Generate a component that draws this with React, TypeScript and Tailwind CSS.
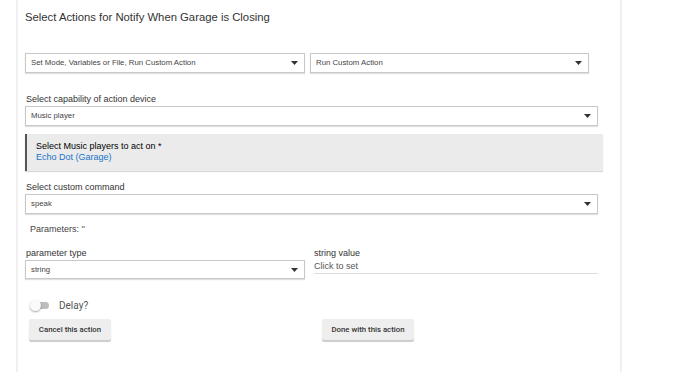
import React from 'react'

function Caret() {
  return (
    <svg width="7" height="4" viewBox="0 0 7 4" className="shrink-0">
      <path d="M0 0h7L3.5 4z" fill="#333" />
    </svg>
  )
}

function SelectBox({ value, className = '' }: { value: string; className?: string }) {
  return (
    <div
      className={`flex h-[20px] items-center justify-between border border-[#c8c8c8] bg-white pl-[5px] pr-[6px] shadow-[0_1px_1px_rgba(0,0,0,0.12)] ${className}`}
    >
      <span className="text-[7.8px] text-[#444]">{value}</span>
      <Caret />
    </div>
  )
}

export default function App() {
  return (
    <div className="h-[372px] w-[689px] overflow-hidden bg-white font-['Liberation_Sans',Arial,sans-serif]">
      <div className="ml-[16px] h-full w-[606px] border-x-2 border-[#f0f0f0] pl-[7px] pr-[16px]">
        <div className="pt-[10px] text-[11.3px] leading-[14px] text-[#333]">
          Select Actions for Notify When Garage is Closing
        </div>

        <div className="mt-[29px] flex gap-[5px]">
          <SelectBox value="Set Mode, Variables or File, Run Custom Action" className="w-[280px]" />
          <SelectBox value="Run Custom Action" className="w-[279px]" />
        </div>

        <div className="mt-[20px] pl-[1px] text-[9px] leading-[12px] text-[#333]">
          Select capability of action device
        </div>
        <SelectBox value="Music player" className="mt-[1px] w-[573px]" />

        <div className="mt-[8px] w-[578px] border-l-2 border-[#555] bg-[#ebebeb] pb-[8px] pl-[9px] pt-[7px] shadow-[0_1px_1px_rgba(0,0,0,0.15)]">
          <div className="text-[9px] leading-[11px] text-black">Select Music players to act on *</div>
          <div className="text-[9px] leading-[11px] text-[#1a73c8]">Echo Dot (Garage)</div>
        </div>

        <div className="mt-[10px] pl-[1px] text-[9px] leading-[12px] text-[#333]">Select custom command</div>
        <SelectBox value="speak" className="mt-[1px] w-[573px]" />

        <div className="mt-[9px] pl-[5px] text-[9px] leading-[12px] text-[#444]">Parameters: ''</div>

        <div className="mt-[13px] flex gap-[9px]">
          <div className="w-[280px]">
            <div className="pl-[1px] text-[9px] leading-[11px] text-[#333]">parameter type</div>
            <SelectBox value="string" className="mt-[1px] !h-[19px]" />
          </div>
          <div className="w-[284px]">
            <div className="text-[9px] leading-[11px] text-[#333]">string value</div>
            <div className="mt-[1px] border-b border-[#ddd] pb-[1px] text-[9px] leading-[12px] text-[#555]">
              Click to set
            </div>
          </div>
        </div>

        <div className="mt-[19px] flex items-center gap-[10px] pl-[5px] font-['Roboto',sans-serif]">
          <div className="relative h-[11px] w-[19px]">
            <div className="absolute left-[3px] top-[2px] h-[7px] w-[16px] rounded-full bg-[#bdbdbd]" />
            <div className="absolute left-0 top-0 h-[11px] w-[11px] rounded-full bg-[#fafafa] shadow-[0_1px_2px_rgba(0,0,0,0.35)]" />
          </div>
          <span className="text-[10px] text-[#555]">Delay?</span>
        </div>

        <div className="mt-[6px] flex pl-[4px] font-['Roboto',sans-serif]">
          <button className="h-[21px] w-[82px] rounded-[2px] bg-[#eeeeee] text-[7.8px] font-medium text-[#333] shadow-[0_2px_1px_rgba(0,0,0,0.2)]">
            Cancel this action
          </button>
          <button className="ml-[211px] h-[21px] w-[92px] rounded-[2px] bg-[#eeeeee] text-[7.8px] font-medium text-[#333] shadow-[0_2px_1px_rgba(0,0,0,0.2)]">
            Done with this action
          </button>
        </div>
      </div>
    </div>
  )
}
